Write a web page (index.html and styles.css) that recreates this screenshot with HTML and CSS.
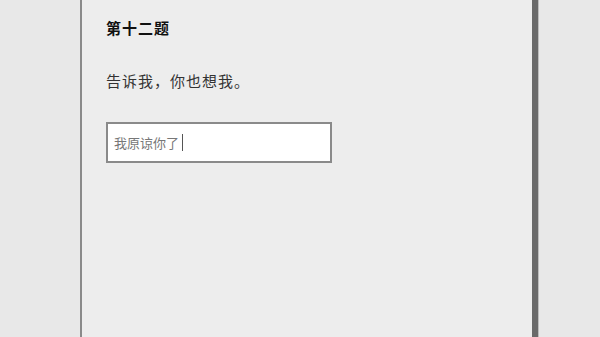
FILE: index.html
```html
<!DOCTYPE html>
<html>
<head>
  <meta charset="utf-8">
  <title>第十二题</title>
  <link rel="stylesheet" href="styles.css">
</head>
<body>
  <div class="page">
    <div class="question">
      <h2 class="question-title">第十二题</h2>
      <p class="question-text">告诉我，你也想我。</p>
      <div class="answer">我原谅你了<span class="caret"></span></div>
    </div>
  </div>
</body>
</html>
```

FILE: styles.css
```css
:root {
  --bg-color: #e8e8e8;
  --panel-color: #ededed;
  --border-light: #8a8a8a;
  --border-dark: #6a6a6a;
  --text-color: #222;
  --muted-color: #777;
}

body {
  margin: 0;
  background: var(--bg-color);
  font-family: "Noto Sans CJK SC", "Noto Sans", sans-serif;
  color: var(--text-color);
}

.page {
  padding-left: 80px;
}

.question {
  box-sizing: border-box;
  width: 458px;
  min-height: 100vh;
  padding: 17px 24px;
  background: var(--panel-color);
  border-left: 2px solid var(--border-light);
  border-right: 6px solid var(--border-dark);
  box-shadow: 1px 0 0 #bdbdbd;
  display: flex;
  flex-direction: column;
  align-items: flex-start;
}

.question-title {
  margin: 0;
  font-size: 15px;
  line-height: 22px;
  font-weight: 700;
  letter-spacing: 1px;
  color: #111;
}

.question-text {
  margin: 31px 0 0;
  font-size: 15px;
  line-height: 22px;
  letter-spacing: 1px;
  color: #333;
}

.answer {
  margin-top: 30px;
  width: 226px;
  height: 41px;
  box-sizing: border-box;
  padding: 0 6px;
  background: #fff;
  border: 2px solid var(--border-light);
  display: flex;
  align-items: center;
  font-size: 13px;
  color: var(--muted-color);
}

.caret {
  display: inline-block;
  width: 1px;
  height: 17px;
  margin-left: 3px;
  background: #555;
}
```
